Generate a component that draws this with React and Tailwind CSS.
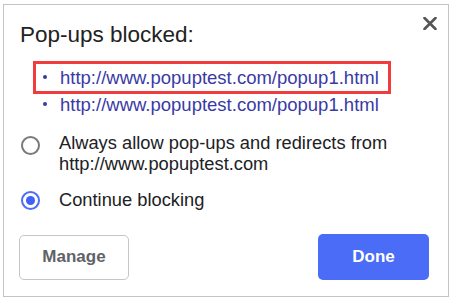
import React from "react";

const FONT = { fontFamily: '"Liberation Sans", Arial, sans-serif' };

function Radio({ checked }) {
  if (checked) {
    return (
      <span className="flex h-[19px] w-[19px] shrink-0 items-center justify-center rounded-full border-2 border-[#4d6ef5] bg-white">
        <span className="h-[9px] w-[9px] rounded-full bg-[#3f63f2]" />
      </span>
    );
  }
  return (
    <span className="block h-[19px] w-[19px] shrink-0 rounded-full border-2 border-[#7a7a7a] bg-white" />
  );
}

function PopupLink({ children }) {
  return (
    <div className="flex h-[27px] items-center">
      <span className="ml-[23px] h-[4px] w-[4px] shrink-0 -translate-y-[1px] rounded-full bg-[#3a3aa6]" />
      <a href="#" className="ml-[13px] text-[18.5px] leading-[27px] text-[#3a3aa6]">
        {children}
      </a>
    </div>
  );
}

export default function App() {
  const url = "http://www.popuptest.com/popup1.html";

  return (
    <div className="bg-white w-[451px] h-[298px] pt-[4px] pl-[3px]" style={FONT}>
      <div className="relative w-[446px] h-[293px] border border-[#c4c4c4] bg-white pt-[17px] pl-[16px] pr-[19px]">
        {/* close */}
        <button className="absolute top-[12px] right-[11px] text-[#555]" aria-label="Close">
          <svg width="14" height="13" viewBox="0 0 14 13">
            <path d="M1.5 1 L12.5 12 M12.5 1 L1.5 12" stroke="currentColor" strokeWidth="2.6" strokeLinecap="round" />
          </svg>
        </button>

        <h2 className="text-[22.5px] leading-[26px] text-[#222]">Pop-ups blocked:</h2>

        <div className="mt-[16px] flex flex-col">
          <div className="relative">
            <PopupLink>{url}</PopupLink>
            <span className="absolute left-[13px] top-[-3px] w-[358px] h-[33px] border-[3px] border-[#f03c3c]" />
          </div>
          <PopupLink>{url}</PopupLink>
        </div>

        <div className="mt-[14px] flex items-start">
          <span className="ml-[1px] mt-[4px]">
            <Radio />
          </span>
          <p className="ml-[19px] text-[18.3px] leading-[21px] text-[#202124]">
            Always allow pop-ups and redirects from
            <br />
            http://www.popuptest.com
          </p>
        </div>

        <div className="mt-[15px] flex items-start">
          <span className="ml-[1px] mt-[2px]">
            <Radio checked />
          </span>
          <p className="ml-[19px] text-[18.3px] leading-[21px] text-[#202124]">Continue blocking</p>
        </div>

        <div className="mt-[24px] flex items-center justify-between">
          <button className="-ml-[1px] h-[45px] w-[110px] rounded-[5px] border border-[#c6c6c6] bg-white text-[17px] font-bold text-[#5f6368]">
            Manage
          </button>
          <button className="h-[46px] w-[111px] rounded-[5px] bg-[#4a6cf7] text-[17px] font-bold text-white">
            Done
          </button>
        </div>
      </div>
    </div>
  );
}
